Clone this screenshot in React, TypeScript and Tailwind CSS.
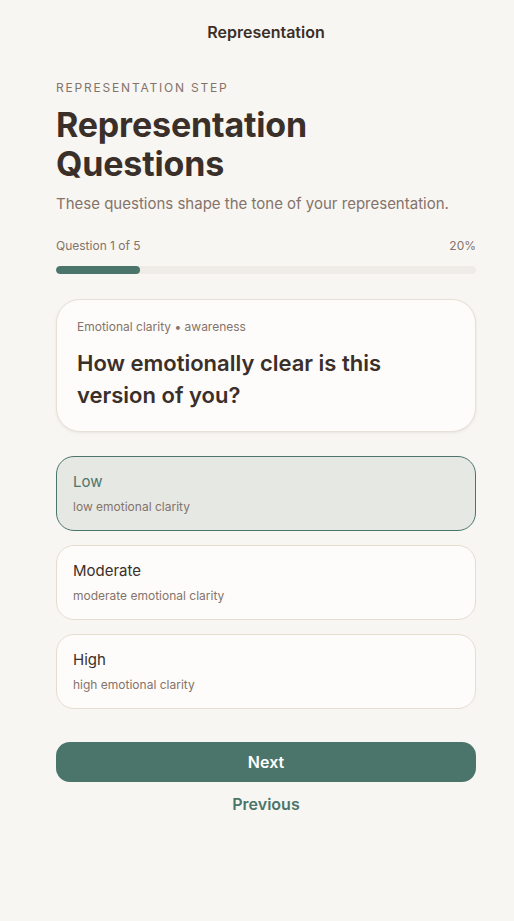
import React from "react";

const options = [
  { title: "Low", sub: "low emotional clarity", selected: true },
  { title: "Moderate", sub: "moderate emotional clarity", selected: false },
  { title: "High", sub: "high emotional clarity", selected: false },
];

export default function App() {
  return (
    <div
      className="min-h-[921px] w-full bg-[#f7f6f2] text-[#3b2f29] pl-[56px] pr-[38px]"
      style={{ fontFamily: "Inter, 'Noto Sans', sans-serif" }}
    >
      <div className="h-[64px] flex items-center justify-center">
        <span className="text-[16px] font-semibold text-[#3b2f29]">Representation</span>
      </div>
      <div className="pt-[16px]">
        <div className="text-[12px] tracking-[0.15em] text-[#85736a] uppercase leading-[16px]">
          Representation step
        </div>
        <h1 className="mt-[9px] text-[34px] font-bold leading-[39px] text-[#3b2f29] tracking-[-0.005em]">
          Representation
          <br />
          Questions
        </h1>
        <p className="mt-[11px] text-[15px] leading-[20px] text-[#85736a]">
          These questions shape the tone of your representation.
        </p>

        <div className="mt-[24px] flex justify-between text-[12px] leading-[16px] text-[#85736a]">
          <span>Question 1 of 5</span>
          <span>20%</span>
        </div>
        <div className="mt-[12px] h-[8px] w-full rounded-full bg-[#efebe6] overflow-hidden">
          <div className="h-full rounded-full bg-[#4b756b]" style={{ width: "20%" }} />
        </div>

        <div className="mt-[25px] rounded-[24px] border border-[#e6e0d8] bg-[#fdfcfa] px-[20px] pt-[19px] pb-[20px] shadow-[0_1px_3px_rgba(60,40,30,0.08)]">
          <div className="text-[12px] leading-[16px] text-[#85736a]">
            Emotional clarity • awareness
          </div>
          <div className="mt-[12px] text-[22px] font-semibold leading-[32px] text-[#3b2f29]">
            How emotionally clear is this
            <br />
            version of you?
          </div>
        </div>

        <div className="mt-[24px] flex flex-col gap-[14px]">
          {options.map((o) => (
            <div
              key={o.title}
              className={
                o.selected
                  ? "h-[75px] rounded-[18px] border border-[#4b756b] bg-[#e6e8e3] px-[16px] pt-[15px]"
                  : "h-[75px] rounded-[18px] border border-[#e6ddd1] bg-[#fdfcfa] px-[16px] pt-[15px]"
              }
            >
              <div
                className={
                  o.selected
                    ? "text-[15px] leading-[20px] text-[#4b756b]"
                    : "text-[15px] leading-[20px] text-[#3b2f29]"
                }
              >
                {o.title}
              </div>
              <div className="mt-[7px] text-[12px] leading-[16px] text-[#85736a]">{o.sub}</div>
            </div>
          ))}
        </div>

        <button className="mt-[33px] h-[40px] w-full rounded-[14px] bg-[#4b756b] text-[16px] font-semibold text-white">
          Next
        </button>
        <div className="mt-[10px] text-center">
          <button className="text-[16px] font-semibold leading-[22px] text-[#4b756b]">Previous</button>
        </div>
      </div>
    </div>
  );
}
